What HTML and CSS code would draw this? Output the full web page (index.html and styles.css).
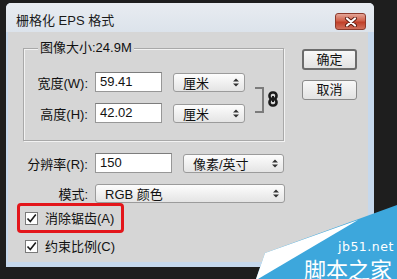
FILE: index.html
```html
<!DOCTYPE html>
<html lang="zh-CN">
<head>
  <meta charset="UTF-8" />
  <title>栅格化 EPS 格式</title>
  <link rel="stylesheet" href="styles.css">
</head>
<body>
  <div class="window">
    <div class="titlebar">
      <span class="title">栅格化 EPS 格式</span>
      <span class="close-btn">
        <svg width="14" height="10" viewBox="0 0 14 10">
          <path d="M3 1.5 L11 8.5 M11 1.5 L3 8.5" stroke="#5a1a10" stroke-width="4" stroke-linecap="round"/>
          <path d="M3 1.5 L11 8.5 M11 1.5 L3 8.5" stroke="#fff" stroke-width="2.2" stroke-linecap="round"/>
        </svg>
      </span>
    </div>
    <div class="client">
      <div class="left-col">
        <div class="size-group">
          <div class="group-title">图像大小:24.9M</div>
          <div class="size-body">
            <div class="size-rows">
              <div class="row">
                <span class="lbl lbl-in">宽度(W):</span>
                <span class="field size-field">59.41</span>
                <span class="select unit-select">厘米
                  <svg class="arrows" width="6" height="9" viewBox="0 0 6 9"><path d="M0 3.5 L3 0.5 L6 3.5Z M0 5.5 L3 8.5 L6 5.5Z" fill="#333"/></svg>
                </span>
              </div>
              <div class="row">
                <span class="lbl lbl-in">高度(H):</span>
                <span class="field size-field">42.02</span>
                <span class="select unit-select">厘米
                  <svg class="arrows" width="6" height="9" viewBox="0 0 6 9"><path d="M0 3.5 L3 0.5 L6 3.5Z M0 5.5 L3 8.5 L6 5.5Z" fill="#333"/></svg>
                </span>
              </div>
            </div>
            <div class="bracket"></div>
            <svg class="chain" width="10" height="16" viewBox="0 0 10 16">
              <rect x="1.5" y="1.5" width="7" height="6.5" rx="3" fill="none" stroke="#1a1a1a" stroke-width="2.6"/>
              <rect x="1.5" y="8" width="7" height="6.5" rx="3" fill="none" stroke="#1a1a1a" stroke-width="2.6"/>
              <rect x="4" y="5" width="2" height="6" fill="#1a1a1a"/>
            </svg>
          </div>
        </div>
        <div class="row res-row">
          <span class="lbl">分辨率(R):</span>
          <span class="field res-field">150</span>
          <span class="select res-select">像素/英寸
            <svg class="arrows" width="6" height="9" viewBox="0 0 6 9"><path d="M0 3.5 L3 0.5 L6 3.5Z M0 5.5 L3 8.5 L6 5.5Z" fill="#333"/></svg>
          </span>
        </div>
        <div class="row mode-row">
          <span class="lbl">模式:</span>
          <span class="select mode-select">RGB 颜色
            <svg class="arrows" width="6" height="9" viewBox="0 0 6 9"><path d="M0 3.5 L3 0.5 L6 3.5Z M0 5.5 L3 8.5 L6 5.5Z" fill="#333"/></svg>
          </span>
        </div>
        <div class="highlight">
          <div class="check-row">
            <span class="checkbox"><svg width="11" height="11" viewBox="0 0 11 11"><path d="M1.5 5.5 L4.3 8.5 L9.8 1.5" fill="none" stroke="#1a1a1a" stroke-width="1.6"/></svg></span>
            <span class="check-label">消除锯齿(A)</span>
          </div>
        </div>
        <div class="check-row plain">
          <span class="checkbox"><svg width="11" height="11" viewBox="0 0 11 11"><path d="M1.5 5.5 L4.3 8.5 L9.8 1.5" fill="none" stroke="#1a1a1a" stroke-width="1.6"/></svg></span>
          <span class="check-label">约束比例(C)</span>
        </div>
      </div>
      <div class="buttons">
        <span class="btn btn-default">确定</span>
        <span class="btn">取消</span>
      </div>
    </div>
  </div>

  <svg class="watermark" width="397" height="279" viewBox="0 0 397 279">
    <polygon points="265,253 397,205 397,279 256,279" fill="#3da7dc"/>
    <polygon points="265,253 358,220 258,279 256,279" fill="#ffffff"/>
  </svg>
  <div class="wm-url">jb51.net</div>
  <div class="wm-name">脚本之家</div>
</body>
</html>
```

FILE: styles.css
```css
  body {
    margin: 0;
    width: 397px;
    height: 279px;
    overflow: hidden;
    background: #1e1e1e;
    font-family: 'Liberation Sans', 'Noto Sans CJK SC', sans-serif;
    font-size: 13px;
    color: #111;
    position: relative;
  }
  .window {
    margin: 3px 0 0 6px;
    width: 368px;
    height: 264px;
    background: #c6d8ec;
    border-radius: 5px 5px 0 0;
    display: flex;
    flex-direction: column;
  }
  .titlebar {
    height: 29px;
    box-sizing: border-box;
    padding: 10px 8px 0 10px;
    display: flex;
    justify-content: space-between;
    align-items: flex-start;
    background: linear-gradient(#e8ecf1, #dce3eb);
    border-radius: 5px 5px 0 0;
  }
  .title {
    line-height: 15px;
    color: #1a1a1a;
  }
  .close-btn {
    width: 31px;
    height: 17px;
    box-sizing: border-box;
    border: 1px solid #8c3a2c;
    border-radius: 3px;
    background: linear-gradient(#e4a597, #d0604a 45%, #c0402a 55%, #d0705c);
    display: flex;
    justify-content: center;
    align-items: center;
  }
  .client {
    flex: 1;
    margin: 0 6px 5px 2px;
    background: #d6d6d6;
    display: flex;
    padding-left: 9px;
  }
  .left-col {
    width: 268px;
    display: flex;
    flex-direction: column;
  }
  .size-group {
    margin: 16px 0 0 6px;
    width: 261px;
    box-sizing: border-box;
    border: 1px solid #a9a9a9;
    box-shadow: inset 1px 1px 0 #f2f2f2, 1px 1px 0 #f2f2f2;
    padding-bottom: 17px;
  }
  .group-title {
    margin: -8px 0 0 14px;
    padding: 0 2px;
    line-height: 14px;
    background: #d6d6d6;
    width: max-content;
  }
  .size-body {
    margin-top: 17px;
    display: flex;
    align-items: center;
  }
  .size-rows {
    display: flex;
    flex-direction: column;
    gap: 11px;
  }
  .row {
    display: flex;
    align-items: center;
  }
  .lbl {
    width: 65px;
    margin-right: 7px;
    text-align: right;
    white-space: nowrap;
  }
  .lbl-in {
    width: 64px;
  }
  .field {
    height: 20px;
    box-sizing: border-box;
    background: #fff;
    border: 1px solid #979797;
    border-top-color: #7d7d7d;
    padding-left: 4px;
    line-height: 18px;
  }
  .size-field {
    width: 67px;
  }
  .select {
    height: 19px;
    box-sizing: border-box;
    border: 1px solid #9b9b9b;
    border-radius: 3px;
    background: linear-gradient(#fdfdfd, #e4e4e4);
    padding: 0 5px 0 9px;
    display: flex;
    justify-content: space-between;
    align-items: center;
    white-space: nowrap;
  }
  .unit-select {
    width: 72px;
    margin-left: 11px;
  }
  .bracket {
    width: 7px;
    height: 22px;
    margin: 4px 0 0 10px;
    border: 2px solid #7c7c7c;
    border-left: none;
  }
  .chain {
    margin: 3px 0 0 4px;
  }
  .res-row {
    margin: 12px 0 0 6px;
  }
  .res-field {
    width: 77px;
  }
  .res-select {
    width: 101px;
    margin-left: 11px;
  }
  .mode-row {
    margin: 11px 0 0 6px;
  }
  .mode-select {
    width: 190px;
  }
  .highlight {
    width: 107px;
    height: 30px;
    box-sizing: border-box;
    border: 3px solid #e3161b;
    border-radius: 4px;
    display: flex;
    align-items: center;
    padding-left: 5px;
  }
  .check-row {
    display: flex;
    align-items: center;
    gap: 7px;
  }
  .check-row.plain {
    margin: 6px 0 0 8px;
  }
  .checkbox {
    width: 13px;
    height: 13px;
    box-sizing: border-box;
    border: 1px solid #7a7a7a;
    background: #fff;
    display: flex;
    justify-content: center;
    align-items: center;
  }
  .check-label {
    line-height: 15px;
  }
  .buttons {
    margin: 17px 0 0 17px;
    display: flex;
    flex-direction: column;
    gap: 10px;
  }
  .btn {
    width: 55px;
    height: 20px;
    box-sizing: border-box;
    border: 1px solid #8a8a8a;
    border-radius: 3px;
    background: linear-gradient(#f8f8f8, #e2e2e2);
    text-align: center;
    line-height: 18px;
  }
  .btn-default {
    height: 21px;
    border: 2px solid #6c6c6c;
    line-height: 17px;
  }
  .watermark {
    position: absolute;
    left: 0;
    top: 0;
  }
  .wm-url {
    position: absolute;
    left: 338px;
    top: 240px;
    color: #fff;
    font-family: 'DejaVu Sans', sans-serif;
    font-size: 12.5px;
    letter-spacing: 0.5px;
    line-height: 13px;
  }
  .wm-name {
    position: absolute;
    left: 304px;
    top: 257px;
    color: #fff;
    font-family: 'Noto Sans CJK SC', sans-serif;
    font-size: 22px;
    line-height: 22px;
    white-space: nowrap;
  }
```
